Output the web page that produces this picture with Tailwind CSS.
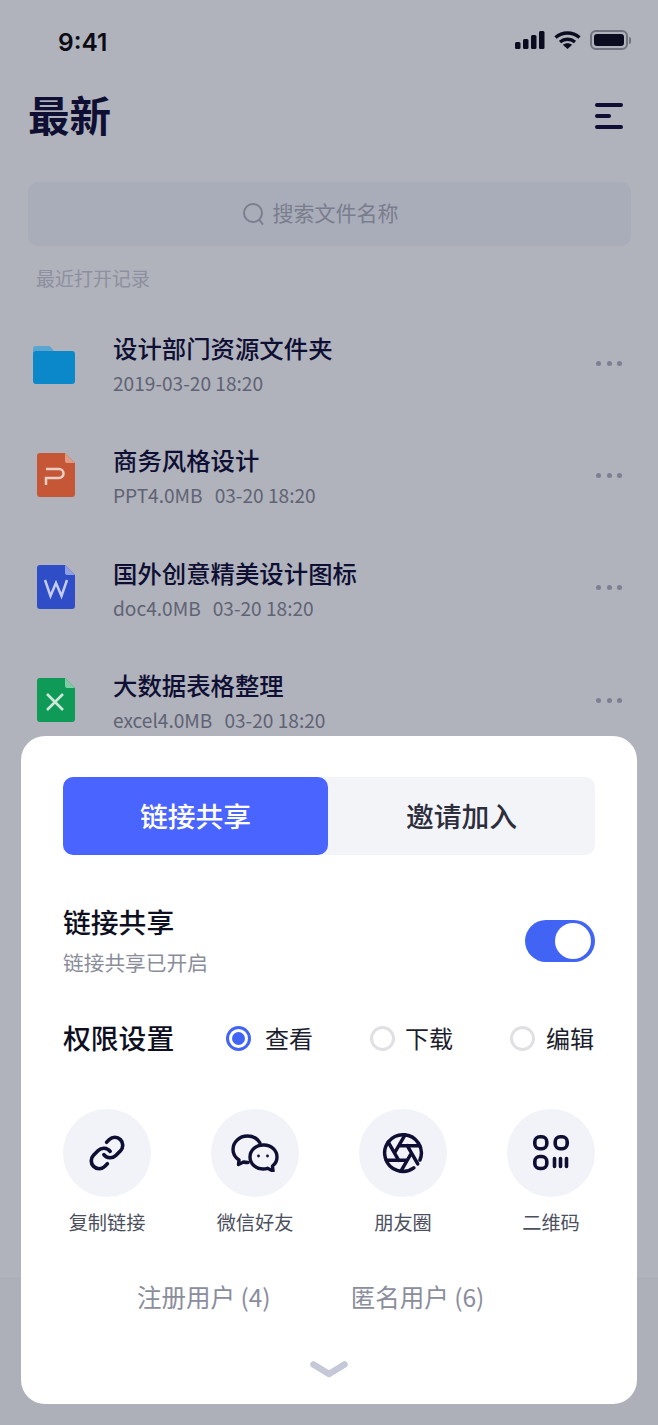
<!DOCTYPE html>
<html lang="zh-CN">
<head>
    <meta charset="UTF-8">
    <meta name="viewport" content="width=device-width, initial-scale=1.0">
    <title>最新</title>
    <script src="https://cdn.jsdelivr.net/npm/@tailwindcss/browser@4"></script>
</head>
<body class="bg-[#b0b2bc] [font-family:'Noto_Sans_CJK_SC','Noto_Sans',sans-serif]">
    <div class="relative w-[658px] h-[1425px] overflow-hidden bg-[#b0b2bc]">
        <!-- status bar -->
        <div class="flex items-center justify-between h-[82px] pl-[58px] pr-[27px]">
            <span class="pt-[2px] text-[24.5px] font-semibold text-[#0b0c14] [font-family:Inter,sans-serif]">9:41</span>
            <div class="flex items-center mb-[2px]">
                <svg width="30" height="18" viewBox="0 0 30 18" fill="#0b0c1f">
                    <rect x="0" y="11" width="5.5" height="7" rx="1.5"/>
                    <rect x="8" y="8" width="5.5" height="10" rx="1.5"/>
                    <rect x="16" y="4" width="5.5" height="14" rx="1.5"/>
                    <rect x="24" y="0" width="5.5" height="18" rx="1.5"/>
                </svg>
                <svg class="ml-[9px]" width="27" height="18" viewBox="0 0 27 18" fill="none" stroke="#0b0c1f" stroke-width="3.4">
                    <path d="M1.5 6.5C8.5 0.5 18.5 0.5 25.5 6.5"/>
                    <path d="M6 11C10.5 7.3 16.5 7.3 21 11"/>
                    <path d="M13.5 18L8.8 13.8C11.5 11.6 15.5 11.6 18.2 13.8Z" fill="#0b0c1f" stroke="none"/>
                </svg>
                <div class="ml-[9px] flex items-center">
                    <div class="w-[38px] h-[20px] rounded-[6px] border-2 border-[#6f717c] p-[2px]">
                        <div class="w-full h-full rounded-[3px] bg-[#0b0c1f]"></div>
                    </div>
                    <div class="ml-[1px] w-[2px] h-[7px] rounded-r-full bg-[#6f717c]"></div>
                </div>
            </div>
        </div>

        <!-- header -->
        <div class="flex items-center justify-between h-[68px] pl-[28px] pr-[35px]">
            <h1 class="mb-[4px] text-[41.5px] leading-[48px] font-semibold text-[#0e0f33]">最新</h1>
            <div class="flex flex-col gap-[7px] w-[28px]">
                <div class="h-[4px] w-full rounded-full bg-[#0e0f33]"></div>
                <div class="h-[4px] w-[16px] rounded-full bg-[#0e0f33]"></div>
                <div class="h-[4px] w-full rounded-full bg-[#0e0f33]"></div>
            </div>
        </div>

        <!-- search -->
        <div class="mt-[32px] mx-[28px] w-[603px] h-[64px] pr-[19px] rounded-[10px] bg-[#a9acb9] flex items-center justify-center">
            <svg width="23" height="24" viewBox="0 0 23 24" fill="none" stroke="#7b7e8e" stroke-width="2" stroke-linecap="round">
                <circle cx="11" cy="11" r="9"/>
                <path d="M17.5 18L20.5 22"/>
            </svg>
            <span class="ml-[8px] mb-[2px] text-[21px] text-[#7a7d8d]">搜索文件名称</span>
        </div>

        <p class="mt-[17px] ml-[36px] text-[19px] leading-[30px] text-[#8d909e]">最近打开记录</p>

        <!-- file list -->
        <div class="mt-[16px] pl-[33px] pr-[36px]">
            <div class="flex items-center h-[112.4px]">
                <svg class="w-[42px] shrink-0" width="42" height="38" viewBox="0 0 42 38">
                    <path d="M0 3a3 3 0 0 1 3-3h12a3 3 0 0 1 3 1.5l3 3.5v8H0z" fill="#5aa6cf"/>
                    <rect x="0" y="5" width="42" height="33" rx="3" fill="#0b88c9"/>
                </svg>
                <div class="ml-[38px] mb-[2px] flex-1">
                    <p class="text-[24.4px] leading-[34px] font-medium text-[#0e0f33]">设计部门资源文件夹</p>
                    <p class="mt-[3px] text-[19.1px] leading-[30px] text-[#5f6373]">2019-03-20 18:20</p>
                </div>
                <div class="flex gap-[5.5px] mb-[4px]">
                    <span class="w-[5px] h-[5px] rounded-full bg-[#7c8090]"></span>
                    <span class="w-[5px] h-[5px] rounded-full bg-[#7c8090]"></span>
                    <span class="w-[5px] h-[5px] rounded-full bg-[#7c8090]"></span>
                </div>
            </div>
            <div class="flex items-center h-[112.4px]">
                <svg class="ml-[4px] mb-[6px] shrink-0" width="38" height="44" viewBox="0 0 38 44">
                    <path d="M3 0h25l10 10v31a3 3 0 0 1-3 3H3a3 3 0 0 1-3-3V3a3 3 0 0 1 3-3z" fill="#c55636"/>
                    <path d="M28 0l10 10h-8a2 2 0 0 1-2-2z" fill="#dd9c86"/>
                    <path d="M9 16h13a4.500 4.500 0 0 1 0 9H9v7" fill="none" stroke="#e8cfc6" stroke-width="2.500"/>
                </svg>
                <div class="ml-[38px] mb-[2px] flex-1">
                    <p class="text-[24.4px] leading-[34px] font-medium text-[#0e0f33]">商务风格设计</p>
                    <p class="mt-[3px] text-[19.1px] leading-[30px] text-[#5f6373] flex gap-[12px]"><span>PPT4.0MB</span><span>03-20 18:20</span></p>
                </div>
                <div class="flex gap-[5.5px] mb-[4px]">
                    <span class="w-[5px] h-[5px] rounded-full bg-[#7c8090]"></span>
                    <span class="w-[5px] h-[5px] rounded-full bg-[#7c8090]"></span>
                    <span class="w-[5px] h-[5px] rounded-full bg-[#7c8090]"></span>
                </div>
            </div>
            <div class="flex items-center h-[112.4px]">
                <svg class="ml-[4px] mb-[6px] shrink-0" width="38" height="44" viewBox="0 0 38 44">
                    <path d="M3 0h25l10 10v31a3 3 0 0 1-3 3H3a3 3 0 0 1-3-3V3a3 3 0 0 1 3-3z" fill="#2f4dc7"/>
                    <path d="M28 0l10 10h-8a2 2 0 0 1-2-2z" fill="#8f9fe0"/>
                    <path d="M8 15l5.500 16 5.500-13 5.500 13L30 15" fill="none" stroke="#c5cdee" stroke-width="2.500"/>
                </svg>
                <div class="ml-[38px] flex-1">
                    <p class="text-[24.4px] leading-[34px] font-medium text-[#0e0f33]">国外创意精美设计图标</p>
                    <p class="mt-[3px] text-[19.1px] leading-[30px] text-[#5f6373] flex gap-[12px]"><span>doc4.0MB</span><span>03-20 18:20</span></p>
                </div>
                <div class="flex gap-[5.5px] mb-[4px]">
                    <span class="w-[5px] h-[5px] rounded-full bg-[#7c8090]"></span>
                    <span class="w-[5px] h-[5px] rounded-full bg-[#7c8090]"></span>
                    <span class="w-[5px] h-[5px] rounded-full bg-[#7c8090]"></span>
                </div>
            </div>
            <div class="flex items-center h-[112.4px]">
                <svg class="ml-[4px] mb-[4px] shrink-0" width="38" height="44" viewBox="0 0 38 44">
                    <path d="M3 0h25l10 10v31a3 3 0 0 1-3 3H3a3 3 0 0 1-3-3V3a3 3 0 0 1 3-3z" fill="#0f9a57"/>
                    <path d="M28 0l10 10h-8a2 2 0 0 1-2-2z" fill="#7fcba3"/>
                    <path d="M10 16l16 16M26 16L10 32" fill="none" stroke="#cfe8da" stroke-width="2.500"/>
                </svg>
                <div class="ml-[38px] mb-[2px] flex-1">
                    <p class="text-[24.4px] leading-[34px] font-medium text-[#0e0f33]">大数据表格整理</p>
                    <p class="mt-[3px] text-[19.1px] leading-[30px] text-[#5f6373] flex gap-[12px]"><span>excel4.0MB</span><span>03-20 18:20</span></p>
                </div>
                <div class="flex gap-[5.5px] mb-[4px]">
                    <span class="w-[5px] h-[5px] rounded-full bg-[#7c8090]"></span>
                    <span class="w-[5px] h-[5px] rounded-full bg-[#7c8090]"></span>
                    <span class="w-[5px] h-[5px] rounded-full bg-[#7c8090]"></span>
                </div>
            </div>
        </div>

        <!-- bottom bar behind the sheet -->
        <div class="absolute left-0 right-0 bottom-0 h-[147px] bg-[#adafb9] border-t border-[#a9abb5]"></div>

        <!-- share sheet -->
        <div class="absolute left-[21px] top-[736px] w-[616px] h-[668px] rounded-[24px] bg-white px-[42px] pt-[41px]">
            <div class="flex h-[78px] rounded-[10px] bg-[#f3f4f8]">
                <div class="w-[265px] rounded-[10px] bg-[#4a64ff] flex items-center justify-center text-[27.8px] font-medium text-white">链接共享</div>
                <div class="flex-1 flex items-center justify-center text-[27.8px] font-medium text-[#2c2e3c]">邀请加入</div>
            </div>

            <div class="mt-[48px] flex items-center justify-between">
                <div>
                    <p class="text-[27.8px] leading-[36px] font-medium text-[#0e0f20]">链接共享</p>
                    <p class="mt-[8px] text-[20.7px] leading-[30px] text-[#8a8d9a]">链接共享已开启</p>
                </div>
                <div class="mt-[2px] w-[70px] h-[42px] rounded-full bg-[#4164f5] flex items-center justify-end pr-[4px]">
                    <div class="w-[36px] h-[36px] rounded-full bg-white"></div>
                </div>
            </div>

            <div class="mt-[41px] h-[40px] flex items-center">
                <p class="w-[163px] shrink-0 text-[27.8px] font-medium text-[#0e0f20]">权限设置</p>
                <div class="shrink-0 w-[25px] h-[25px] rounded-full border-[3px] border-[#4164f5] flex items-center justify-center">
                    <div class="w-[13px] h-[13px] rounded-full bg-[#4164f5]"></div>
                </div>
                <span class="ml-[14px] whitespace-nowrap text-[24px] text-[#1c1e2e]">查看</span>
                <div class="shrink-0 ml-[57px] w-[25px] h-[25px] rounded-full border-[3px] border-[#dfe0e4]"></div>
                <span class="ml-[10px] whitespace-nowrap text-[24px] text-[#1c1e2e]">下载</span>
                <div class="shrink-0 ml-[57px] w-[25px] h-[25px] rounded-full border-[3px] border-[#dfe0e4]"></div>
                <span class="ml-[11px] whitespace-nowrap text-[24px] text-[#1c1e2e]">编辑</span>
            </div>

            <div class="mt-[51px] flex justify-between">
                <div class="w-[88px] flex flex-col items-center">
                    <div class="w-[88px] h-[88px] rounded-full bg-[#f2f3f8] flex items-center justify-center">
                        <svg width="38" height="38" viewBox="0 0 24 24" fill="none" stroke="#0e0f33" stroke-width="2.300" stroke-linecap="round" stroke-linejoin="round">
                            <path d="M10 13a5 5 0 0 0 7.54.54l3-3a5 5 0 0 0-7.07-7.07l-1.72 1.71"/>
                            <path d="M14 11a5 5 0 0 0-7.54-.54l-3 3a5 5 0 0 0 7.07 7.07l1.71-1.71"/>
                        </svg>
                    </div>
                    <p class="mt-[12px] text-[19.2px] leading-[26px] whitespace-nowrap text-[#4c4f5e]">复制链接</p>
                </div>
                <div class="w-[88px] flex flex-col items-center">
                    <div class="w-[88px] h-[88px] rounded-full bg-[#f2f3f8] flex items-center justify-center">
                        <svg width="48" height="38" viewBox="0 0 48 38" fill="none" stroke="#0e0f33" stroke-width="3.400" stroke-linecap="round" stroke-linejoin="round">
                            <path d="M29 9C26.500 4.500 21.500 2 16.500 2 8.500 2 2 8 2 15.500c0 4.500 2.300 8 6 10.500l-.5 4.500 5-2.500c1.500.4 3 .5 4.500.5"/>
                            <path d="M32 11C24.800 11 19 16.300 19 23s5.800 12 13 12c1.500 0 3-.2 4.500-.7l5.500 2.700-.5-5c3-2.200 4.500-5.500 4.500-9 0-6.700-5.800-12-13-12z"/>
                            <circle cx="27.500" cy="22" r="1.400" fill="#0e0f33" stroke="none"/>
                            <circle cx="36.500" cy="22" r="1.400" fill="#0e0f33" stroke="none"/>
                        </svg>
                    </div>
                    <p class="mt-[12px] text-[19.2px] leading-[26px] whitespace-nowrap text-[#4c4f5e]">微信好友</p>
                </div>
                <div class="w-[88px] flex flex-col items-center">
                    <div class="w-[88px] h-[88px] rounded-full bg-[#f2f3f8] flex items-center justify-center">
                        <svg width="44" height="44" viewBox="0 0 24 24" fill="none" stroke="#0e0f33" stroke-width="1.900" stroke-linecap="round" stroke-linejoin="round">
                            <path d="M21.240 15.830A10 10 0 1 0 17.880 20.090"/>
                            <path d="M14.310 8l5.740 9.940M9.690 8h11.480M7.380 12l5.740-9.940M9.690 16L3.950 6.060M14.310 16H2.830M16.620 12l-5.740 9.940"/>
                        </svg>
                    </div>
                    <p class="mt-[12px] text-[19.2px] leading-[26px] whitespace-nowrap text-[#4c4f5e]">朋友圈</p>
                </div>
                <div class="w-[88px] flex flex-col items-center">
                    <div class="w-[88px] h-[88px] rounded-full bg-[#f2f3f8] flex items-center justify-center">
                        <svg width="36" height="36" viewBox="0 0 36 36" fill="none" stroke="#0e0f33" stroke-width="3.600" stroke-linecap="round">
                            <rect x="1.800" y="1.800" width="12" height="12" rx="5"/>
                            <rect x="22.200" y="1.800" width="12" height="12" rx="5"/>
                            <rect x="1.800" y="21.500" width="12" height="12" rx="5"/>
                            <path d="M21.500 23.500v8M27.500 23.500v8M33.500 23.500v8"/>
                        </svg>
                    </div>
                    <p class="mt-[12px] text-[19.2px] leading-[26px] whitespace-nowrap text-[#4c4f5e]">二维码</p>
                </div>
            </div>

            <div class="mt-[44px] ml-[74px] flex gap-[80px] text-[24.5px] leading-[36px] whitespace-nowrap text-[#8a8d9c]">
                <span>注册用户 (4)</span>
                <span>匿名用户 (6)</span>
            </div>

            <div class="mt-[46px] flex justify-center">
                <svg width="38" height="17" viewBox="0 0 38 17" fill="none" stroke="#c5c8d6" stroke-width="6.500" stroke-linecap="round" stroke-linejoin="round">
                    <path d="M3.500 3.500L19 13L34.500 3.500"/>
                </svg>
            </div>
        </div>
    </div>
</body>
</html>
